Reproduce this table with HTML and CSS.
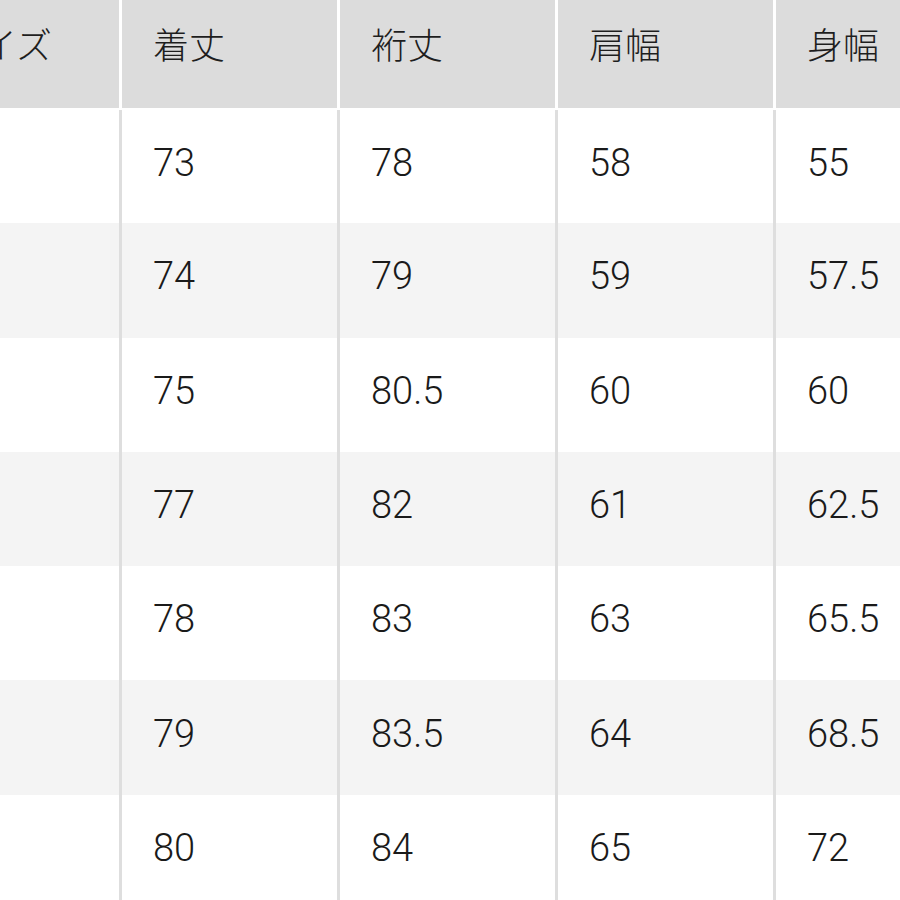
FILE: index.html
```html
<!DOCTYPE html>
<html lang="ja">
<head>
<meta charset="utf-8">
<title>サイズ表</title>
<link rel="stylesheet" href="styles.css">
</head>
<body>
<table class="size-table">
  <thead>
    <tr>
      <th class="first">サイズ</th><th>着丈</th><th>裄丈</th><th>肩幅</th><th>身幅</th>
    </tr>
  </thead>
  <tbody>
    <tr><td></td><td>73</td><td>78</td><td>58</td><td>55</td></tr>
    <tr><td></td><td>74</td><td>79</td><td>59</td><td>57.5</td></tr>
    <tr><td></td><td>75</td><td>80.5</td><td>60</td><td>60</td></tr>
    <tr><td></td><td>77</td><td>82</td><td>61</td><td>62.5</td></tr>
    <tr><td></td><td>78</td><td>83</td><td>63</td><td>65.5</td></tr>
    <tr><td></td><td>79</td><td>83.5</td><td>64</td><td>68.5</td></tr>
    <tr><td></td><td>80</td><td>84</td><td>65</td><td>72</td></tr>
  </tbody>
</table>
</body>
</html>
```
FILE: styles.css
```css
html, body {
  margin: 0;
  padding: 0;
  background: #ffffff;
  overflow: hidden;
}

.size-table {
  margin-left: -99px;
  border-collapse: collapse;
  table-layout: fixed;
  width: 1090px;
  font-family: "Noto Sans CJK JP", "Noto Sans", sans-serif;
  font-weight: 300;
  font-size: 36px;
  color: #1e1e1e;
}

.size-table th,
.size-table td {
  width: 218px;
  box-sizing: border-box;
  text-align: left;
  padding: 0 0 0 31px;
  vertical-align: middle;
  white-space: nowrap;
}

.size-table th {
  height: 109px;
  background: #dcdcdc;
  font-weight: 300;
  border-left: 3px solid #ffffff;
  border-bottom: 2px solid #ffffff;
  padding-bottom: 22px;
}

.size-table th.first {
  padding-left: 41px;
}

.size-table td {
  height: 114.3px;
  border-left: 3px solid #dedede;
  padding-bottom: 8px;
  font-family: Roboto, "Noto Sans", sans-serif;
  font-size: 38px;
  font-weight: 300;
  color: #1a1a1a;
}

.size-table tbody tr:nth-child(even) td {
  background: #f4f4f4;
}
```
